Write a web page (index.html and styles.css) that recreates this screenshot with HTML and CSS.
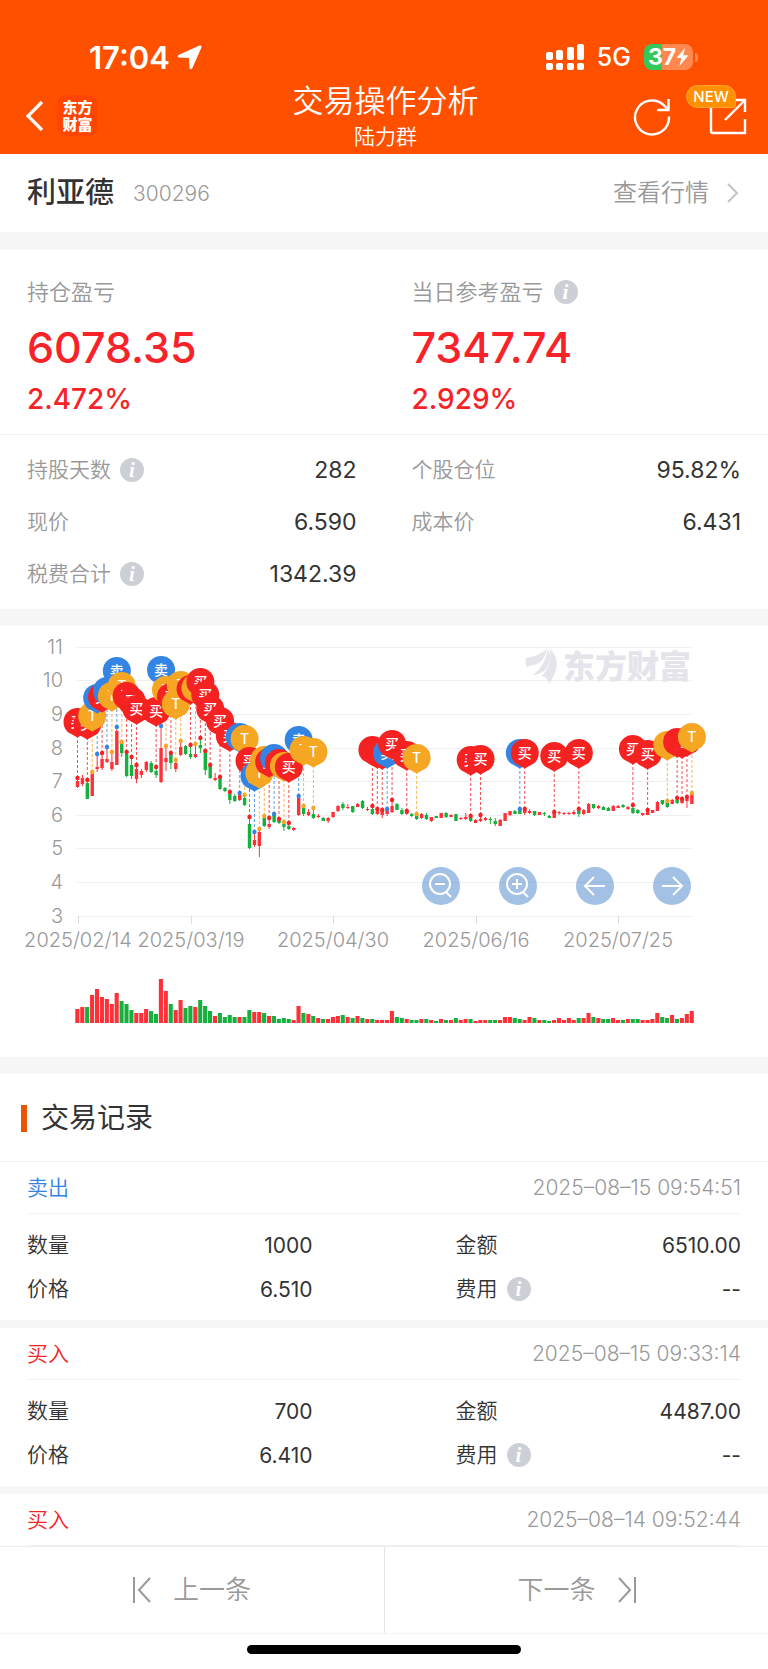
FILE: index.html
```html
<!DOCTYPE html>
<html lang="zh-CN">
<head>
    <meta charset="UTF-8">
    <meta name="viewport" content="width=device-width, initial-scale=1">
    <title>交易操作分析</title>
    <link rel="stylesheet" href="styles.css">
</head>
<body>
    <header class="header">
        <div class="status-bar">
            <div class="status-left">
                <span class="clock">17:04</span>
                <svg class="location" width="25" height="25" viewBox="0 0 26 26"><path d="M24.500 0.600 Q26 1 25.300 2.800 L16 24 Q14.300 26.500 13 24 L12.400 13.600 L2 13 Q-0.600 11.800 2 10.200 L22.800 0.800 Q24 0.200 24.500 0.600 Z" fill="#fff"/></svg>
            </div>
            <div class="status-right">
                <svg width="38" height="28" viewBox="0 0 38 28" fill="#fff">
                    <rect x="0" y="9" width="7" height="8" rx="2"/>
                    <rect x="10" y="7" width="7" height="10" rx="2"/>
                    <rect x="21" y="4" width="7" height="13" rx="2"/>
                    <rect x="31" y="1" width="7" height="16" rx="2"/>
                    <rect x="0" y="20" width="7" height="7" rx="2"/>
                    <rect x="10" y="20" width="7" height="7" rx="2"/>
                    <rect x="21" y="20" width="7" height="7" rx="2"/>
                    <rect x="31" y="20" width="7" height="7" rx="2"/>
                </svg>
                <span class="network">5G</span>
                <div class="battery">
                    <span>37</span>
                    <svg width="13" height="18" viewBox="0 0 13 18"><path d="M9 0 L0.500 10 H5.500 L3.500 18 L12.500 7.200 H7.300 Z" fill="#fff"/></svg>
                </div>
            </div>
        </div>
        <nav class="nav">
            <div class="nav-side">
                <button class="icon-button" aria-label="返回">
                    <svg width="20" height="32" viewBox="0 0 20 32"><path d="M18 2 L4 16 L18 30" fill="none" stroke="#fff" stroke-width="3.200"/></svg>
                </button>
                <div class="app-logo"><span>东方</span><span>财富</span></div>
            </div>
            <div class="nav-title">
                <h1>交易操作分析</h1>
                <p>陆力群</p>
            </div>
            <div class="nav-side nav-actions">
                <button class="icon-button" aria-label="刷新">
                    <svg width="38" height="40" viewBox="0 0 38 40" fill="none" stroke="#fff" stroke-width="2.400"><path d="M36 20.500 A17 17 0 1 1 30.800 9.200 L34 12.500"/><path d="M35.500 3 V14 H24"/></svg>
                </button>
                <button class="icon-button share" aria-label="分享">
                    <svg width="38" height="40" viewBox="0 0 38 40" fill="none" stroke="#fff" stroke-width="2.400"><path d="M2 10 V35 Q2 37 4 37 H36 V23"/><path d="M25 4 H36 V16"/><path d="M36 4 L16 24"/></svg>
                    <span class="badge">NEW</span>
                </button>
            </div>
        </nav>
    </header>

    <main>
        <section class="stock">
            <h2>利亚德</h2>
            <span class="stock-code">300296</span>
            <a class="quote-link" href="#">查看行情
                <svg width="14" height="22" viewBox="0 0 14 22"><path d="M1 2 L10 11 L1 20" fill="none" stroke="#c4c4c4" stroke-width="2"/></svg>
            </a>
        </section>

        <section class="profit">
            <div>
                <p class="profit-label">持仓盈亏</p>
                <p class="profit-value">6078.35</p>
                <p class="profit-rate">2.472%</p>
            </div>
            <div>
                <p class="profit-label">当日参考盈亏 <button class="info" aria-label="说明">i</button></p>
                <p class="profit-value">7347.74</p>
                <p class="profit-rate">2.929%</p>
            </div>
        </section>

        <dl class="details">
            <div class="pair"><dt>持股天数 <button class="info" aria-label="说明">i</button></dt><dd>282</dd></div>
            <div class="pair"><dt>个股仓位</dt><dd>95.82%</dd></div>
            <div class="pair"><dt>现价</dt><dd>6.590</dd></div>
            <div class="pair"><dt>成本价</dt><dd>6.431</dd></div>
            <div class="pair"><dt>税费合计 <button class="info" aria-label="说明">i</button></dt><dd>1342.39</dd></div>
        </dl>

        <section class="chart">
            <svg id="chart" viewBox="0 0 768 431"></svg>
            <div class="chart-controls">
                <button aria-label="缩小"><svg width="24" height="26" viewBox="0 0 24 26"><circle cx="11" cy="11" r="10"/><path d="M6 11 H16 M16.500 18.500 L22 24"/></svg></button>
                <button aria-label="放大"><svg width="24" height="26" viewBox="0 0 24 26"><circle cx="11" cy="11" r="10"/><path d="M6 11 H16 M11 6 V16 M16.500 18.500 L22 24"/></svg></button>
                <button aria-label="左移"><svg width="24" height="20" viewBox="0 0 24 20"><path d="M22 10 H2 M11 1 L2 10 L11 19"/></svg></button>
                <button aria-label="右移"><svg width="24" height="20" viewBox="0 0 24 20"><path d="M2 10 H22 M13 1 L22 10 L13 19"/></svg></button>
            </div>
        </section>

        <section class="records">
            <h2>交易记录</h2>
            <article class="record">
                <div class="record-head"><span class="sell">卖出</span><time>2025–08–15 09:54:51</time></div>
                <dl class="record-body">
                    <div class="pair"><dt>数量</dt><dd>1000</dd></div>
                    <div class="pair"><dt>金额</dt><dd>6510.00</dd></div>
                    <div class="pair"><dt>价格</dt><dd>6.510</dd></div>
                    <div class="pair"><dt>费用 <button class="info" aria-label="说明">i</button></dt><dd>--</dd></div>
                </dl>
            </article>
            <article class="record">
                <div class="record-head"><span class="buy">买入</span><time>2025–08–15 09:33:14</time></div>
                <dl class="record-body">
                    <div class="pair"><dt>数量</dt><dd>700</dd></div>
                    <div class="pair"><dt>金额</dt><dd>4487.00</dd></div>
                    <div class="pair"><dt>价格</dt><dd>6.410</dd></div>
                    <div class="pair"><dt>费用 <button class="info" aria-label="说明">i</button></dt><dd>--</dd></div>
                </dl>
            </article>
            <article class="record">
                <div class="record-head"><span class="buy">买入</span><time>2025–08–14 09:52:44</time></div>
            </article>
        </section>
    </main>

    <footer class="footer">
        <div class="pager">
            <button>
                <svg width="18" height="26" viewBox="0 0 18 26"><path d="M1 0 V26 M17 1 L6 13 L17 25"/></svg>
                上一条
            </button>
            <button>
                下一条
                <svg width="18" height="26" viewBox="0 0 18 26"><path d="M17 0 V26 M1 1 L12 13 L1 25"/></svg>
            </button>
        </div>
        <div class="home-indicator"></div>
    </footer>

    <script src="chart.js"></script>
</body>
</html>
```

FILE: styles.css
```css
* {
    box-sizing: border-box;
}

body {
    margin: 0;
    background: #fff;
    color: #333;
    font-family: Inter, "Noto Sans CJK SC", sans-serif;
    font-size: 21px;
}

h1, h2, p, dl, dd {
    margin: 0;
}

button {
    padding: 0;
    border: none;
    background: none;
    color: inherit;
    font: inherit;
    cursor: pointer;
}

svg {
    display: block;
}

/* header */
.header {
    background: #ff5000;
    color: #fff;
}

.status-bar {
    display: flex;
    justify-content: space-between;
    align-items: center;
    height: 82px;
    padding: 32px 75px 0 89px;
}

.status-left, .status-right {
    display: flex;
    align-items: center;
}

.status-left {
    gap: 7px;
}

.clock {
    font-size: 31px;
    font-weight: 600;
}

.network {
    margin: 0 13px;
    font-size: 25px;
    font-weight: 500;
}

.battery {
    position: relative;
    display: flex;
    align-items: center;
    justify-content: center;
    width: 49px;
    height: 26px;
    border-radius: 8px;
    background: linear-gradient(90deg, #34c759 37%, #ff8850 37%);
    font-size: 23px;
    font-weight: 700;
}

.battery::after {
    content: "";
    position: absolute;
    right: -5px;
    width: 3px;
    height: 9px;
    border-radius: 0 4px 4px 0;
    background: #ff8850;
}

.nav {
    display: grid;
    grid-template-columns: 1fr auto 1fr;
    align-items: center;
    height: 72px;
    padding: 0 21px 0 24px;
}

.nav-side {
    display: flex;
    align-items: center;
    gap: 13px;
    padding-bottom: 5px;
}

.app-logo {
    display: flex;
    flex-direction: column;
    justify-content: center;
    align-items: center;
    width: 41px;
    height: 41px;
    border-radius: 9px;
    background: #ff4500;
    font-size: 15px;
    font-weight: 900;
    line-height: 17px;
}

.nav-title {
    text-align: center;
}

.nav-title h1 {
    font-size: 31px;
    font-weight: 350;
    line-height: 38px;
}

.nav-title p {
    font-weight: 350;
    line-height: 34px;
}

.nav-actions {
    justify-content: flex-end;
    gap: 38px;
}

.share {
    position: relative;
}

.badge {
    position: absolute;
    left: -23px;
    top: -11px;
    width: 50px;
    height: 23px;
    border: 1px solid #ffa533;
    border-radius: 12px 12px 3px 12px;
    background: #ff9000;
    font-size: 15px;
    font-weight: 500;
    line-height: 21px;
}

/* stock name row */
.stock {
    display: flex;
    align-items: center;
    height: 78px;
    padding: 0 27px;
}

.stock h2 {
    margin-right: 19px;
    font-size: 29px;
    font-weight: 500;
    line-height: 40px;
}

.stock-code {
    color: #999;
    font-size: 21px;
    font-weight: 350;
}

.quote-link {
    display: flex;
    align-items: center;
    gap: 18px;
    margin-left: auto;
    color: #999;
    font-size: 24px;
    font-weight: 350;
    line-height: 34px;
    text-decoration: none;
}

/* profit and loss */
.profit, .details {
    display: grid;
    grid-template-columns: 1fr 1fr;
    column-gap: 55px;
}

.profit {
    padding: 26px 27px 17px;
    border-top: 18px solid #f7f7f7;
    border-bottom: 1px solid #f0f0f0;
}

.profit-label {
    display: flex;
    align-items: center;
    gap: 10px;
    color: #999;
    font-size: 22px;
    font-weight: 350;
    line-height: 32px;
}

.profit-value, .profit-rate {
    color: #f72328;
    font-weight: 500;
}

.profit-value {
    margin: 13px 0 8px;
    font-size: 43px;
    line-height: 52px;
}

.profit-rate {
    font-size: 28px;
    line-height: 36px;
}

.info {
    width: 24px;
    height: 24px;
    border-radius: 50%;
    background: #cccfd5;
    color: #fff;
    font-family: "Liberation Serif", serif;
    font-size: 21px;
    font-style: italic;
    font-weight: 700;
    line-height: 24px;
}

.details {
    padding: 9px 27px;
    border-bottom: 17px solid #f7f7f7;
}

.pair {
    display: flex;
    justify-content: space-between;
    align-items: center;
}

.pair dt {
    display: flex;
    align-items: center;
    gap: 9px;
    font-weight: 350;
    line-height: 30px;
}

.details .pair {
    height: 52px;
}

.details dt {
    color: #999;
}

.details dd {
    font-size: 23px;
}

/* chart */
.chart {
    position: relative;
    border-bottom: 17px solid #f7f7f7;
}

.chart text {
    fill: #999;
    font-size: 20px;
    font-weight: 350;
}

.chart .watermark {
    fill: #e4e4ea;
    font-size: 32px;
    font-weight: 900;
}

.chart .pin-text {
    fill: #fff;
    font-size: 14px;
    font-weight: 500;
}

.chart-controls {
    position: absolute;
    right: 10%;
    top: 56%;
    display: flex;
    gap: 39px;
}

.chart-controls button {
    display: flex;
    justify-content: center;
    align-items: center;
    width: 38px;
    height: 38px;
    border-radius: 50%;
    background: rgba(70, 131, 204, 0.5);
}

.chart-controls svg {
    fill: none;
    stroke: #fff;
    stroke-width: 2;
}

/* trade records */
.records > h2 {
    display: flex;
    align-items: center;
    gap: 14px;
    height: 88px;
    padding-left: 21px;
    font-size: 28px;
    font-weight: 400;
    line-height: 40px;
}

.records > h2::before {
    content: "";
    width: 6px;
    height: 27px;
    background: #ea5504;
}

.record {
    border-bottom: 8px solid #f7f7f7;
}

.record:last-child {
    border-bottom: none;
}

.records > h2 + .record {
    box-shadow: 0 -1px #f0f0f0;
}

.record-head {
    display: flex;
    justify-content: space-between;
    align-items: center;
    height: 52px;
    margin: 0 27px;
    border-bottom: 1px solid #f3f3f3;
    font-weight: 350;
    line-height: 30px;
}

.record-head time {
    color: #999;
}

.sell {
    color: #3383e6;
}

.buy {
    color: #f72328;
}

.record-body {
    display: grid;
    grid-template-columns: 1fr 1fr;
    column-gap: 143px;
    padding: 9px 27px;
}

.record-body .pair {
    height: 44px;
}

/* bottom bar */
.pager {
    display: grid;
    grid-template-columns: 1fr 1fr;
    height: 88px;
    border-top: 1px solid #ececec;
    border-bottom: 1px solid #f3f3f3;
}

.pager button {
    display: flex;
    justify-content: center;
    align-items: center;
    gap: 22px;
    color: #999;
    font-size: 26px;
    font-weight: 350;
    line-height: 36px;
}

.pager button + button {
    border-left: 1px solid #e6e6e6;
}

.pager svg {
    fill: none;
    stroke: #999;
    stroke-width: 2;
}

.home-indicator {
    width: 274px;
    height: 9px;
    margin: 11px auto 15px;
    border-radius: 5px;
    background: #000;
}
```

FILE: chart.js
```javascript
const RED = '#ff3037';
const GREEN = '#16b03e';
const PINS = {
    B: { color: '#f52222', label: '买' },
    S: { color: '#3484e4', label: '卖' },
    T: { color: '#f5a623', label: 'T' }
};

const LEFT = 77;
const RIGHT = 692;
const STEP = 4.915;
const VOLUME_BASE = 397;

// volume height + direction, one per trading day
const volumes = (
    '14r 16r 16g 28r 34r 26r 24r 19r 30r 22g 19g 13g 10r 10r 14r 12g 9g 44r 32r 19g 13r 23r 15g 17g 16r 23g 17g 12g 7r 10g ' +
    '6g 8g 6g 6r 6g 13g 11r 11r 10g 7r 7g 4g 5g 4g 3r 17r 10g 9r 7g 5r 4g 4r 6r 7r 8g 6r 5g 7r 5g 4r 4g 3r 3r ' +
    '3r 12r 6g 5g 4r 3g 3g 4r 4g 3r 2g 4r 3g 3r 5g 3r 4r 4g 2r 3r 3r 3g 3g 3r 6r 6r 5g 4g 3r 6r 5g 3r 3g 2g 3r 5r 3r ' +
    '5r 3r 5g 5r 10r 6g 5r 4g 4g 5r 3r 3g 4r 4g 4g 3r 3r 4r 10r 6g 5g 8r 4g 5r 9r 12r'
).split(' ');

// high, body top, body bottom, low
const candles = (
    '152,155,161,162 149,152,158,160 154,157,173,173 146,148,170,170 128,141,143,146 127,133,142,144 121,133,136,137 126,136,143,145 ' +
    '101,105,139,139 116,117,127,131 126,128,150,151 131,139,150,153 139,143,153,157 143,145,149,152 135,136,144,146 135,137,146,147 ' +
    '141,145,149,152 100,122,156,157 120,132,136,145 127,128,137,143 134,137,143,146 115,121,129,130 119,120,128,129 119,128,131,133 ' +
    '118,128,131,132 112,119,122,127 125,127,144,149 139,140,152,153 147,152,154,155 151,153,163,164 161,162,165,166 166,168,174,178 ' +
    '168,170,175,176 167,169,174,175 169,172,179,180 191,198,222,223 206,214,219,221 203,206,220,231 190,192,200,201 192,198,201,203 ' +
    '188,189,196,197 193,194,197,198 196,198,201,205 197,200,203,204 201,202,204,205 170,172,189,190 180,182,188,190 183,186,189,190 ' +
    '182,188,192,193 188,190,191,192 191,192,195,195 191,192,195,197 186,186,191,192 179,180,185,186 176,178,182,184 178,181,182,183 ' +
    '180,180,186,187 177,178,181,181 174,175,182,183 181,183,184,185 180,183,188,189 183,185,188,189 184,185,189,192 183,184,188,190 ' +
    '174,180,186,187 177,178,184,184 182,184,188,189 185,185,188,189 187,188,190,191 188,189,193,194 187,188,192,193 187,189,193,194 ' +
    '191,191,195,196 190,190,192,192 187,187,192,192 186,187,191,192 188,189,191,191 188,188,195,195 191,192,193,194 187,191,193,194 ' +
    '190,192,195,196 193,194,197,197 189,193,195,196 191,192,194,195 191,193,194,198 192,195,198,200 193,194,200,200 187,187,195,195 ' +
    '185,185,189,190 184,185,188,188 183,184,188,188 183,184,187,189 183,185,187,188 185,185,189,190 186,186,189,189 186,187,188,190 ' +
    '189,190,192,192 186,187,192,192 185,186,187,189 186,187,188,189 186,187,188,189 184,186,188,189 183,185,188,191 183,184,188,189 ' +
    '177,178,187,187 178,178,182,183 179,180,182,183 180,181,184,184 181,182,185,185 179,180,185,185 179,180,182,182 178,179,181,182 ' +
    '180,181,183,184 179,182,187,188 183,184,187,188 187,187,189,190 184,185,189,189 184,184,187,187 175,176,185,185 174,174,178,179 ' +
    '175,176,181,182 173,174,178,178 172,174,177,178 173,174,177,178 171,173,175,182 167,168,178,178'
).split(' ');

// trades, by day index
const trades = (
    '0B 2B 3T 4S 5B 6S 7T 8S 9T 10B 11B 12B 16B 17S 18T 19B 21T 20T 23B 24T 25B 26B 27B 29B 31B 33S 34T 35B 36S 37T ' +
    '38T 39B 40S 41B 42T 43B 45S 46T 48T 60B 61B 62B 63S 64B 67B 69T 80B 82B 90S 91B 97B 102B 113B 116B 120T 122B 123B 124B 125T'
).split(' ');

const dates = [[0, '2025/02/14'], [23, '2025/03/19'], [52, '2025/04/30'], [81, '2025/06/16'], [110, '2025/07/25']];

function dayX(i) {
    return LEFT + 0.5 + i * STEP;
}

let svg = '';

// grid and y axis
for (let v = 11; v >= 3; v--) {
    const y = Math.round(20.7 + (11 - v) * 33.6);
    svg += `<rect x="${LEFT}" y="${y}" width="${RIGHT - LEFT}" height="1" fill="#efefef"/>`;
    svg += `<text x="63" y="${y + 7}" text-anchor="end">${v}</text>`;
}

// x axis
dates.forEach(([i, label]) => {
    const x = Math.round(dayX(i));
    svg += `<rect x="${x}" y="290" width="1" height="8" fill="#ddd"/>`;
    svg += `<text x="${x}" y="321" text-anchor="middle">${label}</text>`;
});

// watermark
svg += `
    <g fill="#e4e4ea">
        <path d="M526 32 Q537 31 547 23 Q544 37 534 39 Q528 40 527 42 Q525 37 526 32 Z"/>
        <path d="M533 49 Q545 40 548 23 Q552 30 548 40 Q544 48 533 49 Z"/>
        <path d="M541 50 Q552 42 550 23 Q560 32 555 47 Q552 54 549 58 Q547 50 541 50 Z"/>
    </g>
    <text class="watermark" x="691" y="52" text-anchor="end">东方财富</text>`;

// candles and volume
candles.forEach((row, i) => {
    const [high, top, bottom, low] = row.split(',').map(Number);
    const color = volumes[i].endsWith('r') ? RED : GREEN;
    const volume = parseInt(volumes[i]);
    const x = dayX(i);
    svg += `<rect x="${x - 0.5}" y="${high}" width="1" height="${low - high}" fill="${color}"/>`;
    svg += `<rect x="${x - 1.7}" y="${top}" width="3.4" height="${bottom - top}" fill="${color}"/>`;
    svg += `<rect x="${x - 2.2}" y="${VOLUME_BASE - volume}" width="4.1" height="${volume}" fill="${color}"/>`;
});

// trade markers
let pins = '';
trades.forEach(trade => {
    const i = parseInt(trade);
    const { color, label } = PINS[trade.slice(-1)];
    const x = dayX(i);
    const y = Number(candles[i].split(',')[0]);
    svg += `<path d="M${x} ${y} V${y - 42}" stroke="${color}" stroke-dasharray="3 2" stroke-opacity="0.8"/>`;
    svg += `<circle cx="${x}" cy="${y}" r="2.2" fill="${color}"/>`;
    pins += `<g transform="translate(${x} ${y - 56})">
        <path d="M0 15.500 L-9 10.600 A14 14 0 1 1 9 10.600 Z" fill="${color}"/>
        <text class="pin-text" y="5" text-anchor="middle">${label}</text>
    </g>`;
});

document.getElementById('chart').innerHTML = svg + pins;
```
